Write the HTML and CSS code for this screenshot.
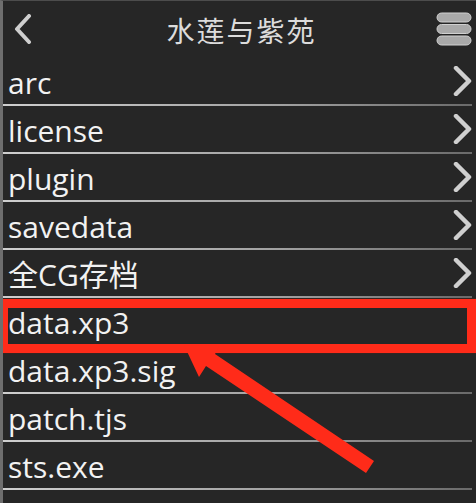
FILE: index.html
```html
<!DOCTYPE html>
<html lang="zh">
<head>
  <meta charset="UTF-8">
  <meta name="viewport" content="width=device-width, initial-scale=1.0">
  <title>水莲与紫苑</title>
  <link rel="stylesheet" href="styles.css">
</head>
<body>
  <div class="screen">
    <header class="titlebar">
      <svg class="back" width="20" height="30" viewBox="0 0 20 30">
        <path d="M16 2 L4 15 L16 28" fill="none" stroke="#cfcfcf" stroke-width="4" stroke-linecap="round" stroke-linejoin="round"/>
      </svg>
      <h1 class="title">水莲与紫苑</h1>
      <svg class="menu" width="36" height="34" viewBox="0 0 36 34">
        <rect x="1" y="1" width="34" height="9" rx="4.5" fill="#a9a9a9" stroke="#d0d0d0"/>
        <rect x="1" y="12.5" width="34" height="9" rx="4.5" fill="#a9a9a9" stroke="#d0d0d0"/>
        <rect x="1" y="24" width="34" height="9" rx="4.5" fill="#a9a9a9" stroke="#d0d0d0"/>
      </svg>
    </header>

    <ul class="files">
      <li class="row"><span>arc</span><svg class="chev" viewBox="0 0 20 30"><path d="M3 2 L16 15 L3 28"/></svg></li>
      <li class="row"><span>license</span><svg class="chev" viewBox="0 0 20 30"><path d="M3 2 L16 15 L3 28"/></svg></li>
      <li class="row"><span>plugin</span><svg class="chev" viewBox="0 0 20 30"><path d="M3 2 L16 15 L3 28"/></svg></li>
      <li class="row"><span>savedata</span><svg class="chev" viewBox="0 0 20 30"><path d="M3 2 L16 15 L3 28"/></svg></li>
      <li class="row"><span>全CG存档</span><svg class="chev" viewBox="0 0 20 30"><path d="M3 2 L16 15 L3 28"/></svg></li>
      <li class="row"><span>data.xp3</span></li>
      <li class="row"><span>data.xp3.sig</span></li>
      <li class="row"><span>patch.tjs</span></li>
      <li class="row"><span>sts.exe</span></li>
      <li class="row"><span></span></li>
    </ul>

    <!-- annotation drawn over the list -->
    <div class="mark"></div>
    <svg class="arrow" width="476" height="503" viewBox="0 0 476 503">
      <polygon points="184,345 219,346 215,354 374,461 366,473 206,366 199,377" fill="#ff2b19"/>
    </svg>
  </div>
</body>
</html>
```

FILE: styles.css
```css
* {
  box-sizing: border-box;
}
body {
  margin: 0;
  background: #262626;
  font-family: "Open Sans", "Noto Sans", "Noto Sans CJK SC", sans-serif;
  color: #f2f2f2;
  height: 503px;
  overflow: hidden;
}
.screen {
  position: relative;
  height: 503px;
  overflow: hidden;
  border-left: 3px solid #6e6e6e;
  border-top: 1px solid #4c4c4c;
}
.titlebar {
  height: 57px;
  display: flex;
  align-items: center;
  justify-content: space-between;
  padding: 0 4px 0 10px;
}
.back {
  margin-top: -1px;
}
.title {
  margin: 0 0 0 14px;
  font-family: "Noto Sans CJK SC", sans-serif;
  font-weight: normal;
  font-size: 28px;
  letter-spacing: 2px;
  color: #dcdcdc;
}
.menu {
  margin-top: -2px;
}
.files {
  list-style: none;
  margin: 0;
  padding: 0;
}
.row {
  height: 48px;
  display: flex;
  align-items: center;
  justify-content: space-between;
  padding: 0 3px 2px 5px;
  font-size: 30px;
  position: relative;
}
.row::after {
  content: "";
  position: absolute;
  left: 0;
  right: 4px;
  bottom: 0;
  height: 2px;
  background: linear-gradient(to right, #cfcfcf, #a0a0a0 60%, #6a6a6a);
}
.row span {
  line-height: 1;
  margin-top: 3px;
}
.chev {
  width: 20px;
  height: 30px;
  fill: none;
  stroke: #cfcfcf;
  stroke-width: 4.5;
  stroke-linecap: round;
  stroke-linejoin: round;
}
.mark {
  position: absolute;
  left: -3px;
  top: 298px;
  width: 476px;
  height: 54px;
  border: 9px solid #ff2b19;
  border-left-width: 8px;
  box-shadow: 0 0 1px #8a1a10;
}
.arrow {
  position: absolute;
  left: -3px;
  top: -1px;
}
```
